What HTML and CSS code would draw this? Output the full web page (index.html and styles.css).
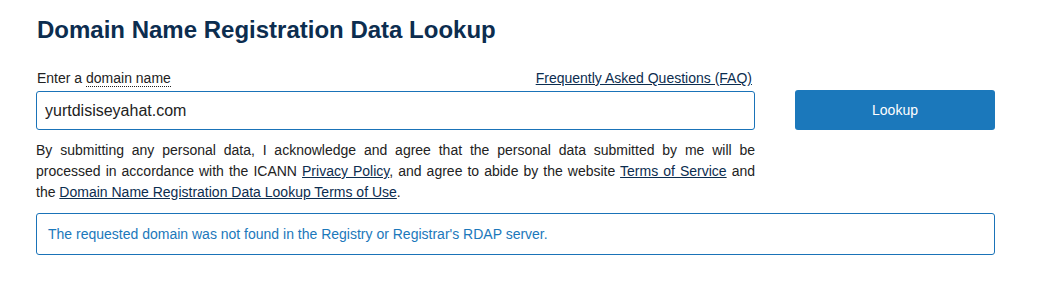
FILE: index.html
```html
<!DOCTYPE html>
<html lang="en">
<head>
<meta charset="utf-8">
<title>Domain Name Registration Data Lookup</title>
<link rel="stylesheet" href="styles.css">
</head>
<body>
<main class="page">
  <h1 class="title">Domain Name Registration Data Lookup</h1>
  <div class="search-row">
    <div class="form-col">
      <div class="label-row">
        <label class="label" for="domain">Enter a <span class="dotted">domain name</span></label>
        <a class="link" href="#">Frequently Asked Questions (FAQ)</a>
      </div>
      <input class="input" id="domain" type="text" value="yurtdisiseyahat.com">
      <p class="terms">By submitting any personal data, I acknowledge and agree that the personal data submitted by me will be processed in accordance with the ICANN <a class="link" href="#">Privacy Policy</a>, and agree to abide by the website <a class="link" href="#">Terms of Service</a> and the <a class="link" href="#">Domain Name Registration Data Lookup Terms of Use</a>.</p>
    </div>
    <div class="button-col">
      <button class="button" type="button">Lookup</button>
    </div>
  </div>
  <div class="alert">The requested domain was not found in the Registry or Registrar's RDAP server.</div>
</main>
</body>
</html>
```

FILE: styles.css
```css
html, body {
  margin: 0;
  padding: 0;
  background: #fff;
}
body {
  font-family: "Liberation Sans", Arial, sans-serif;
  color: #222;
  font-size: 14px;
}
.page {
  padding: 14px 43px 0 36px;
}
.title {
  margin: 0 0 0 1px;
  font-size: 24px;
  line-height: 32px;
  font-weight: bold;
  color: #0c2d4f;
}
.search-row {
  display: flex;
  gap: 40px;
  margin-top: 21px;
}
.form-col {
  width: 719px;
}
.button-col {
  width: 200px;
  padding-top: 23px;
}
.label-row {
  display: flex;
  justify-content: space-between;
  align-items: baseline;
  padding: 1px 3px 0 1px;
  line-height: 21px;
  height: 23px;
}
.label {
  color: #222;
}
.dotted {
  border-bottom: 1px dotted #222;
}
.link {
  color: #0c2d4f;
  text-decoration: underline;
}
.input {
  display: block;
  box-sizing: border-box;
  width: 719px;
  height: 39px;
  margin: 0;
  padding: 0 8px;
  border: 1px solid #1a73b8;
  border-radius: 3px;
  font-family: "Liberation Sans", Arial, sans-serif;
  font-size: 16px;
  color: #222;
  outline: none;
}
.terms {
  margin: 10px 0 0 0;
  line-height: 21px;
  text-align: justify;
}
.button {
  display: block;
  width: 200px;
  height: 40px;
  border: none;
  border-radius: 3px;
  background: #1b78bb;
  color: #fff;
  font-family: "Liberation Sans", Arial, sans-serif;
  font-size: 14px;
  cursor: pointer;
}
.alert {
  box-sizing: border-box;
  margin-top: 10px;
  width: 959px;
  height: 42px;
  padding: 10px 11px;
  border: 1px solid #1a73b8;
  border-radius: 3px;
  color: #1b78bb;
  line-height: 20px;
}
```
